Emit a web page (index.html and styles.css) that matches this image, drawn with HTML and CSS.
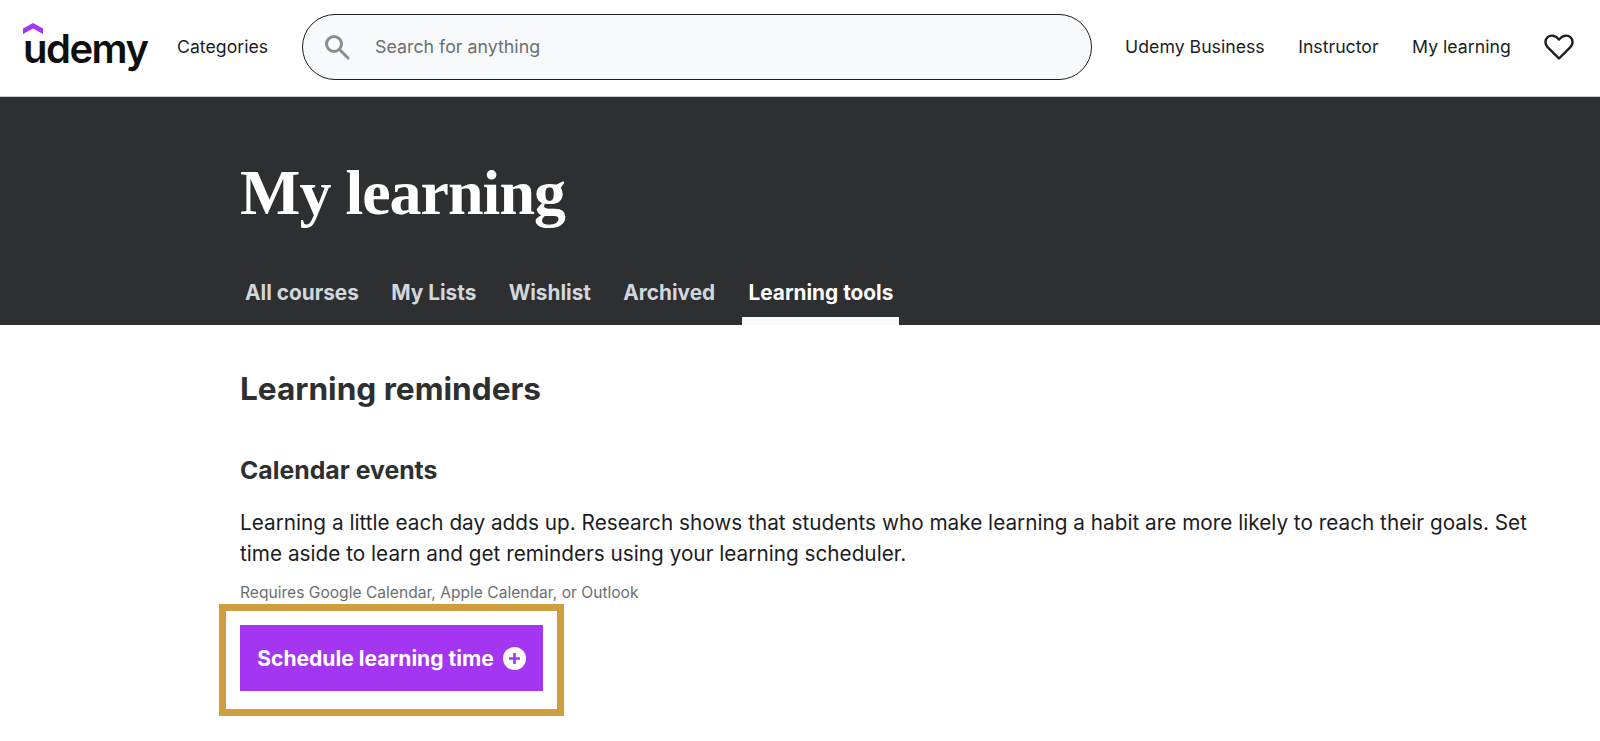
FILE: index.html
```html
<!DOCTYPE html>
<html lang="en">
<head>
    <meta charset="UTF-8">
    <meta name="viewport" content="width=device-width, initial-scale=1.0">
    <title>My learning - Udemy</title>
    <link rel="stylesheet" href="styles.css">
</head>
<body>
    <header class="header">
        <a class="logo" href="#">
            <svg class="logo-mark" width="20" height="11" viewBox="0 0 20 11"><path d="M10 0 20 5.6V11L10 5.4 0 11V5.6z" fill="#a435f0"/></svg>
            <span class="logo-text">udemy</span>
        </a>
        <a class="header-link categories" href="#">Categories</a>
        <form class="search">
            <svg class="search-icon" width="26" height="26" viewBox="0 0 26 26" fill="none" stroke="#8a8d91" stroke-width="3"><circle cx="10" cy="10" r="7.5"/><path d="M15.5 15.5 24 24" stroke-linecap="round"/></svg>
            <input class="search-input" type="text" placeholder="Search for anything">
        </form>
        <nav class="header-nav">
            <a class="header-link" href="#">Udemy Business</a>
            <a class="header-link" href="#">Instructor</a>
            <a class="header-link" href="#">My learning</a>
        </nav>
        <svg class="heart" width="30" height="28" viewBox="0 0 30 28" fill="none" stroke="#1c1d1f" stroke-width="2.4" stroke-linejoin="round"><path d="M15 25.5 3.6 14.2C.6 11 .9 6.6 3.6 4.2 6.6 1.600 11.600 2 15 6.600 18.400 2 23.400 1.600 26.400 4.200 29.100 6.600 29.400 11 26.400 14.200z"/></svg>
    </header>

    <section class="banner">
        <h1 class="banner-title">My learning</h1>
        <nav class="tabs">
            <a class="tab" href="#">All courses</a>
            <a class="tab" href="#">My Lists</a>
            <a class="tab" href="#">Wishlist</a>
            <a class="tab" href="#">Archived</a>
            <a class="tab active" href="#">Learning tools</a>
        </nav>
    </section>

    <main class="content">
        <h2 class="section-title">Learning reminders</h2>
        <h3 class="sub-title">Calendar events</h3>
        <p class="intro">Learning a little each day adds up. Research shows that students who make learning a habit are more likely to reach their goals. Set time aside to learn and get reminders using your learning scheduler.</p>
        <p class="note">Requires Google Calendar, Apple Calendar, or Outlook</p>
        <div class="highlight">
            <button type="button" class="btn">
                Schedule learning time
                <svg width="23" height="23" viewBox="0 0 23 23"><circle cx="11.500" cy="11.500" r="11.500" fill="#fff"/><path d="M11.500 6v11M6 11.500h11" stroke="#a435f0" stroke-width="2.600"/></svg>
            </button>
        </div>
    </main>
</body>
</html>
```

FILE: styles.css
```css
body {
    font-family: Inter, "Liberation Sans", sans-serif;
    margin: 0;
    background-color: #fff;
    color: #1c1d1f;
    height: 741px;
    overflow: hidden;
}

a {
    color: inherit;
    text-decoration: none;
}

.header {
    display: flex;
    align-items: center;
    height: 96px;
    padding: 0 20px 0 23px;
    border-bottom: 1px solid #c9cbcd;
}

.logo {
    display: flex;
    flex-direction: column;
    width: 125px;
    margin-top: -1px;
}

.logo-mark {
    display: block;
    margin-bottom: -8px;
}

.logo-text {
    font-size: 40px;
    font-weight: 600;
    line-height: 46px;
    letter-spacing: -1.500px;
    color: #0f0f10;
}

.header-link {
    font-size: 17.700px;
    white-space: nowrap;
    margin-top: -4px;
}

.categories {
    margin-left: 29px;
}

.search {
    flex: none;
    display: flex;
    align-items: center;
    gap: 23px;
    width: 790px;
    height: 66px;
    box-sizing: border-box;
    margin: -3px 0 0 34px;
    padding-left: 21px;
    background: #f7f9fa;
    border: 1.500px solid #1c1d1f;
    border-radius: 33px;
}

.search-input {
    flex: 1;
    border: none;
    outline: none;
    background: none;
    font-family: inherit;
    font-size: 17.800px;
}

.search-input::placeholder {
    color: #6a6f73;
    opacity: 1;
}

.header-nav {
    display: flex;
    gap: 33.500px;
    margin-left: 33px;
}

.heart {
    flex: none;
    margin: -2px 0 0 33px;
}

.banner {
    background: #2d2f31;
    height: 228px;
    padding-left: 240px;
    display: flex;
    flex-direction: column;
}

.banner-title {
    font-family: "Liberation Serif", serif;
    font-size: 64px;
    font-weight: 700;
    line-height: 80px;
    letter-spacing: -1px;
    color: #fff;
    margin: 0;
    padding-top: 56px;
}

.tabs {
    display: flex;
    margin-top: auto;
}

.tab {
    padding: 0 5px;
    margin-right: 22.300px;
    height: 45px;
    box-sizing: border-box;
    font-size: 20.800px;
    font-weight: 700;
    color: #d1d7dc;
}

.tab.active {
    color: #fff;
    padding: 0 6px;
    border-bottom: 8px solid #f7f9fa;
    margin-right: 0;
}

.content {
    padding: 0 50px 0 240px;
}

.section-title {
    font-size: 31.600px;
    font-weight: 700;
    line-height: 40px;
    color: #2d2f31;
    margin: 44px 0 0;
}

.sub-title {
    font-size: 24.800px;
    font-weight: 700;
    line-height: 30px;
    color: #2d2f31;
    margin: 46px 0 0;
}

.intro {
    font-size: 20.750px;
    line-height: 31px;
    margin: 22px 0 0;
}

.note {
    font-size: 15.600px;
    line-height: 20px;
    color: #6a6f73;
    margin: 14px 0 0;
}

.highlight {
    width: fit-content;
    margin: 1px 0 0 -21px;
    padding: 14px 14px 18px 14px;
    border: 7px solid #cf9e3f;
}

.btn {
    display: flex;
    align-items: center;
    justify-content: center;
    gap: 9px;
    width: 303px;
    height: 66px;
    background: #a435f0;
    color: white;
    border: none;
    font-family: inherit;
    font-size: 21.100px;
    font-weight: 700;
    cursor: pointer;
}
```
